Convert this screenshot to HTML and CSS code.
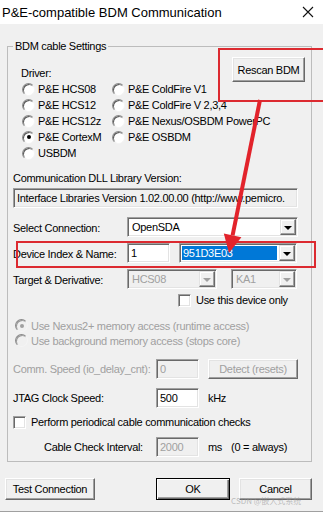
FILE: index.html
```html
<!DOCTYPE html>
<html>
<head>
<meta charset="utf-8">
<link rel="stylesheet" href="styles.css">
</head>
<body>
<div class="window">
  <div class="titlebar">
    <span class="title">P&amp;E-compatible BDM Communication</span>
    <svg class="close" width="12" height="12" viewBox="0 0 12 12"><path d="M1 1L11 11M11 1L1 11" stroke="#111" stroke-width="1.1" fill="none"/></svg>
  </div>
  <div class="client">
    <fieldset class="group">
      <legend>BDM cable Settings</legend>
      <div class="row-top">
        <span class="driver-label">Driver:</span>
        <div class="btn rescan">Rescan BDM</div>
      </div>
      <div class="drivers">
        <div class="opt"><span class="radio"></span>P&amp;E HCS08</div>
        <div class="opt"><span class="radio"></span>P&amp;E ColdFire V1</div>
        <div class="opt"><span class="radio"></span>P&amp;E HCS12</div>
        <div class="opt"><span class="radio"></span>P&amp;E ColdFire V 2,3,4</div>
        <div class="opt"><span class="radio"></span>P&amp;E HCS12z</div>
        <div class="opt"><span class="radio"></span>P&amp;E Nexus/OSBDM PowerPC</div>
        <div class="opt"><span class="radio checked"></span>P&amp;E CortexM</div>
        <div class="opt"><span class="radio"></span>P&amp;E OSBDM</div>
        <div class="opt"><span class="radio"></span>USBDM</div>
      </div>
      <div class="cap">Communication DLL Library Version:</div>
      <div class="field ro version">Interface Libraries Version 1.02.00.00 (http://www.pemicro.</div>
      <div class="form-row conn">
        <span class="lbl">Select Connection:</span>
        <div class="field combo w171"><span class="val">OpenSDA</span><span class="ddbtn"></span></div>
      </div>
      <div class="form-row dev">
        <span class="lbl">Device Index &amp; Name:</span>
        <div class="field w43">1</div>
        <div class="field combo w118 ml9"><span class="sel">951D3E03</span><span class="ddbtn"></span></div>
      </div>
      <div class="form-row target">
        <span class="lbl">Target &amp; Derivative:</span>
        <div class="field combo dis w90"><span class="val">HCS08</span><span class="ddbtn off"></span></div>
        <div class="field combo dis w66 ml14"><span class="val">KA1</span><span class="ddbtn off"></span></div>
      </div>
      <div class="check-row only">
        <span class="check"></span>Use this device only
      </div>
      <div class="mem">
        <div class="mem-opt gray"><span class="radio off checked"></span>Use Nexus2+ memory access (runtime access)</div>
        <div class="mem-opt gray"><span class="radio off"></span>Use background memory access (stops core)</div>
      </div>
      <div class="form-row comm">
        <span class="lbl2 gray">Comm. Speed (io_delay_cnt):</span>
        <div class="field dis w43">0</div>
        <div class="btn gray detect">Detect (resets)</div>
      </div>
      <div class="form-row jtag">
        <span class="lbl2">JTAG Clock Speed:</span>
        <div class="field w43">500</div>
        <span class="unit">kHz</span>
      </div>
      <div class="check-row perform">
        <span class="check"></span>Perform periodical cable communication checks
      </div>
      <div class="form-row cable">
        <span class="lbl2 indent">Cable Check Interval:</span>
        <div class="field dis w43">2000</div>
        <span class="unit">ms</span><span class="unit2">(0 = always)</span>
      </div>
    </fieldset>
    <div class="buttons">
      <div class="btn test">Test Connection</div>
      <div class="right-btns">
        <div class="btn default ok">OK</div>
        <div class="btn cancel">Cancel</div>
      </div>
    </div>
  </div>
</div>
<div class="watermark">CSDN @嵌入式系统</div>
<svg class="annot" width="323" height="514" viewBox="0 0 323 514">
  <rect x="219" y="49" width="110" height="52" fill="none" stroke="#dc2a30" stroke-width="2"/>
  <rect x="17" y="242" width="298" height="25" fill="none" stroke="#dc2a30" stroke-width="2"/>
  <line x1="260" y1="100" x2="232.6" y2="235.4" stroke="#e2232b" stroke-width="4"/>
  <polygon points="229,253 241.4,237.2 223.8,233.6" fill="#e2232b"/>
</svg>
</body>
</html>
```

FILE: styles.css
```css
* { box-sizing: border-box; }
html, body { margin: 0; padding: 0; }
body {
  width: 323px;
  height: 514px;
  overflow: hidden;
  background: #ffffff;
  font-family: "Liberation Sans", Arial, sans-serif;
  font-size: 11px;
  letter-spacing: -0.3px;
  color: #000;
  position: relative;
}
.window {
  height: 512px;
  display: flex;
  flex-direction: column;
  border-bottom: 1px solid #a0a0a0;
}
.titlebar {
  height: 24px;
  flex: none;
  background: #fff;
  display: flex;
  align-items: center;
  justify-content: space-between;
  padding: 0 9px 0 2px;
}
.title {
  font-family: "Liberation Sans", Arial, sans-serif;
  font-size: 13px;
  letter-spacing: 0;
  color: #000;
}
.client {
  flex: 1;
  background: #f0f0f0;
  padding: 0 11px 0 7px;
}
.group {
  margin: 15px 0 0;
  padding: 0 14px 4px 5px;
  border: 1px solid #bcbcbc;
  min-width: 0;
}
.group legend {
  padding: 0 2px;
  line-height: 14px;
}
.row-top {
  display: flex;
  justify-content: space-between;
  align-items: flex-end;
  height: 28px;
}
.driver-label {
  margin-left: 8px;
  margin-bottom: 1px;
  line-height: 14px;
}
.btn {
  background: #f0f0f0;
  border: 1px solid;
  border-color: #fff #696969 #696969 #fff;
  box-shadow: inset -1px -1px #a0a0a0, inset 1px 1px #e3e3e3;
  display: flex;
  align-items: center;
  justify-content: center;
  white-space: nowrap;
  flex: none;
}
.rescan {
  width: 73px;
  height: 25px;
  align-self: flex-start;
  margin-top: 4px;
  margin-right: -8px;
}
.drivers {
  display: grid;
  grid-template-columns: 90px auto;
  grid-auto-rows: 16px;
  margin-left: 9px;
}
.opt, .mem-opt {
  display: flex;
  align-items: center;
  gap: 3px;
  white-space: nowrap;
}
.radio {
  width: 13px;
  height: 13px;
  flex: none;
  border-radius: 50%;
  background: #fff;
  border: 1px solid;
  border-color: #8a8a8a #f4f4f4 #f4f4f4 #8a8a8a;
  box-shadow: inset 1px 1px #5a5a5a;
  display: flex;
  align-items: center;
  justify-content: center;
}
.radio.checked::after {
  content: "";
  width: 4px;
  height: 4px;
  border-radius: 50%;
  background: #000;
}
.radio.off { background: #f0f0f0; box-shadow: inset 1px 1px #9a9a9a; }
.radio.off.checked::after { background: #a0a0a0; }
.cap {
  margin-top: 10px;
  line-height: 14px;
}
.field {
  height: 20px;
  background: #fff;
  border: 1px solid;
  border-color: #a0a0a0 #fff #fff #a0a0a0;
  box-shadow: inset 1px 1px #696969, inset -1px -1px #e3e3e3;
  padding-left: 3px;
  display: flex;
  align-items: center;
  white-space: nowrap;
  overflow: hidden;
  flex: none;
}
.field.ro, .field.dis { background: #f0f0f0; }
.field.dis { color: #a0a0a0; }
.version {
  margin-top: 3px;
  width: 285px;
}
.form-row {
  display: flex;
  align-items: center;
  height: 20px;
  white-space: nowrap;
}
.lbl { width: 114px; flex: none; padding-top: 2px; }
.lbl2 { width: 143px; flex: none; }
.indent { padding-left: 31px; }
.conn { margin-top: 9px; }
.dev { margin-top: 6px; }
.target { margin-top: 6px; }
.comm { margin-top: 11px; }
.jtag { margin-top: 9px; }
.cable { margin-top: 8px; }
.w171 { width: 171px; }
.w118 { width: 118px; }
.w90 { width: 90px; }
.w66 { width: 66px; }
.w43 { width: 43px; }
.ml9 { margin-left: 9px; }
.ml14 { margin-left: 14px; }
.combo { padding-left: 2px; }
.combo .val { flex: 1; padding-left: 2px; }
.sel {
  flex: 1;
  height: 14px;
  line-height: 14px;
  background: #0078d7;
  color: #fff;
  padding-left: 1px;
  margin-right: 2px;
}
.ddbtn {
  width: 16px;
  height: 16px;
  flex: none;
  margin-right: 1px;
  background: #f0f0f0;
  border: 1px solid;
  border-color: #e3e3e3 #696969 #696969 #e3e3e3;
  box-shadow: inset -1px -1px #a0a0a0, inset 1px 1px #fff;
  display: flex;
  align-items: center;
  justify-content: center;
}
.ddbtn::after {
  content: "";
  border-left: 4px solid transparent;
  border-right: 4px solid transparent;
  border-top: 4px solid #000;
  margin-top: 1px;
}
.ddbtn.off::after { border-top-color: #a0a0a0; }
.check-row {
  display: flex;
  align-items: center;
  height: 14px;
  gap: 5px;
  white-space: nowrap;
}
.only { margin-top: 4px; margin-left: 165px; }
.perform { margin-top: 7px; }
.check {
  width: 13px;
  height: 13px;
  flex: none;
  background: #fff;
  border: 1px solid;
  border-color: #a0a0a0 #fff #fff #a0a0a0;
  box-shadow: inset 1px 1px #696969, inset -1px -1px #e3e3e3;
}
.mem { margin-top: 11px; margin-left: 2px; }
.mem-opt { height: 15px; }
.gray { color: #a0a0a0; }
.detect {
  width: 90px;
  height: 20px;
  margin-left: 9px;
}
.unit { margin-left: 9px; }
.unit2 { margin-left: 9px; }
.buttons {
  display: flex;
  justify-content: space-between;
  margin-top: 16px;
  margin-left: -2px;
}
.test { width: 90px; height: 22px; }
.right-btns { display: flex; gap: 9px; }
.ok { width: 74px; height: 22px; }
.cancel { width: 73px; height: 22px; }
.btn.default {
  border-color: #000;
  box-shadow: inset 1px 1px #fff, inset -1px -1px #696969, inset -2px -2px #a0a0a0;
}
.watermark {
  position: absolute;
  left: 231px;
  top: 495px;
  font-size: 8px;
  letter-spacing: 0;
  color: rgba(150, 150, 150, 0.6);
  font-family: "Noto Sans CJK SC", sans-serif;
  white-space: nowrap;
}
.annot {
  position: absolute;
  left: 0;
  top: 0;
  pointer-events: none;
}
```
